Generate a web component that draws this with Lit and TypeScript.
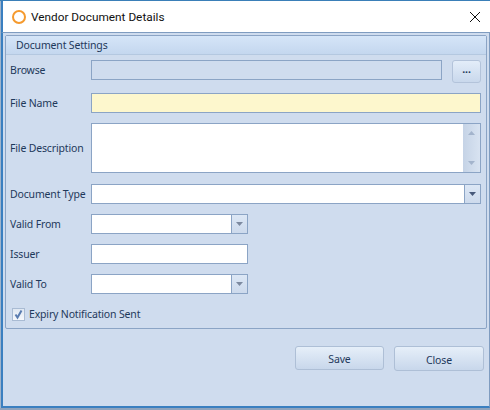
import { LitElement, css, html } from "lit";
import { customElement } from "lit/decorators.js";

const arrow = html`<svg width="7" height="4" viewBox="0 0 7 4"><path d="M0 0h7L3.500 4z" /></svg>`;

@customElement("app-root")
export class AppRoot extends LitElement {
    static styles = css`
    :host {
      display: block;
      width: 490px;
      height: 410px;
      background: #8fa3bd;
      font-family: "Noto Sans", Arial, sans-serif;
      font-size: 10.5px;
      letter-spacing: -0.16px;
      color: #1e395b;
    }
    .window {
      box-sizing: border-box;
      width: 490px;
      height: 408px;
      padding-left: 1px;
      border-top: 1px solid #3a7fb8;
      display: flex;
      flex-direction: column;
      background: #9fb4cc;
    }
    .titlebar {
      height: 31px;
      flex: none;
      background: #fff;
      border-left: 2px solid #3a7fc0;
      display: flex;
      align-items: center;
      padding: 0 10px 0 9px;
      gap: 5px;
      font-family: Roboto, sans-serif;
      font-size: 11.8px;
      letter-spacing: 0;
      color: #111;
    }
    .titlebar span { flex: 1; padding-top: 1px; }
    .ring {
      box-sizing: border-box;
      width: 14px;
      height: 14px;
      border: 2px solid #f59a2e;
      border-radius: 50%;
    }
    .body {
      flex: 1;
      box-sizing: border-box;
      background: #cfdcee;
      border-top: 1px solid #7f9cc0;
      border-left: 2px solid #3a7fc0;
      border-right: 1px solid #7f9cc0;
      border-bottom: 2px solid #3a7fc0;
      padding: 2px 2px 0 2px;
      display: flex;
      flex-direction: column;
    }
    .panel {
      box-sizing: border-box;
      height: 294px;
      border: 1px solid #8ba4c5;
      border-radius: 2px;
    }
    .panel-head {
      height: 18px;
      padding-left: 10px;
      line-height: 18px;
      background: linear-gradient(#d5e5f8, #c4d7ef);
      border-bottom: 1px solid #b4c8e0;
    }
    .form {
      display: grid;
      grid-template-columns: 81px 1fr;
      align-items: center;
      padding: 5px 5px 0 4px;
      row-gap: 10px;
    }
    .top { align-self: start; line-height: 20px; }
    .field {
      box-sizing: border-box;
      height: 20px;
      border: 1px solid #8ba4c5;
      background: #fff;
      display: flex;
      justify-content: flex-end;
    }
    .browse {
      display: flex;
      gap: 10px;
      height: 23px;
      align-items: flex-start;
    }
    .browse .field { flex: 1; background: #cfdcee; }
    .dots {
      box-sizing: border-box;
      width: 29px;
      height: 23px;
      border: 1px solid #b3c3da;
      border-radius: 3px;
      background: linear-gradient(#e3edf9, #c9d8ec);
      font-weight: bold;
      text-align: center;
      line-height: 17px;
    }
    .name { background: #fdf7cd; }
    .desc { height: 50px; }
    .short { width: 157px; }
    .gap { margin-top: 1px; }
    .scroll {
      width: 17px;
      background: linear-gradient(90deg, #c5d3e6, #d8e3f1);
      display: flex;
      flex-direction: column;
      justify-content: space-between;
      align-items: center;
      padding: 7px 0;
      box-sizing: border-box;
      fill: #a3b4cc;
    }
    .scroll svg { display: block; }
    .drop {
      box-sizing: border-box;
      width: 16px;
      border-left: 1px solid #8ba4c5;
      background: linear-gradient(#dce7f5, #cddaec);
      display: flex;
      align-items: center;
      justify-content: center;
      fill: #7d8aa0;
    }
    .drop.dark { fill: #47597a; }
    .up { transform: rotate(180deg); }
    .check {
      grid-column: 1 / 3;
      display: flex;
      align-items: center;
      gap: 4px;
      margin: 4px 0 0 2px;
      height: 12px;
    }
    .box {
      box-sizing: border-box;
      width: 13px;
      height: 13px;
      border: 1px solid #a9bbd3;
      background: linear-gradient(#dfe7f2, #f5f8fc);
    }
    .box svg { display: block; }
    .actions {
      display: flex;
      justify-content: flex-end;
      gap: 10px;
      margin-top: 17px;
      padding-right: 3px;
      align-items: flex-start;
    }
    .btn {
      box-sizing: border-box;
      width: 89px;
      height: 24px;
      border: 1px solid #aebfd6;
      border-radius: 3px;
      background: linear-gradient(#e6eff9, #c8d7eb);
      text-align: center;
      line-height: 24px;
    }
    .btn.close { width: 90px; height: 25px; line-height: 26px; }
  `;

    render() {
        return html`<div class="window">
            <div class="titlebar">
                <div class="ring"></div>
                <span>Vendor Document Details</span>
                <svg width="10" height="10" viewBox="0 0 10 10"><path d="M0 0L10 10M10 0L0 10" stroke="#111" fill="none" /></svg>
            </div>
            <div class="body">
                <div class="panel">
                    <div class="panel-head">Document Settings</div>
                    <div class="form">
                        <label class="top">Browse</label>
                        <div class="browse"><div class="field"></div><div class="dots">...</div></div>
                        <label>File Name</label>
                        <div class="field name"></div>
                        <label>File Description</label>
                        <div class="field desc">
                            <div class="scroll"><span class="up">${arrow}</span>${arrow}</div>
                        </div>
                        <label class="gap">Document Type</label>
                        <div class="field gap"><div class="drop dark">${arrow}</div></div>
                        <label>Valid From</label>
                        <div class="field short"><div class="drop">${arrow}</div></div>
                        <label>Issuer</label>
                        <div class="field short"></div>
                        <label>Valid To</label>
                        <div class="field short"><div class="drop">${arrow}</div></div>
                        <div class="check">
                            <div class="box"><svg width="11" height="11" viewBox="0 0 11 11"><path d="M2.500 5.500L4.500 8.500L8.500 1.500" stroke="#5a7cb0" stroke-width="2" fill="none" /></svg></div>
                            <span>Expiry Notification Sent</span>
                        </div>
                    </div>
                </div>
                <div class="actions">
                    <div class="btn">Save</div>
                    <div class="btn close">Close</div>
                </div>
            </div>
        </div>`;
    }
}
